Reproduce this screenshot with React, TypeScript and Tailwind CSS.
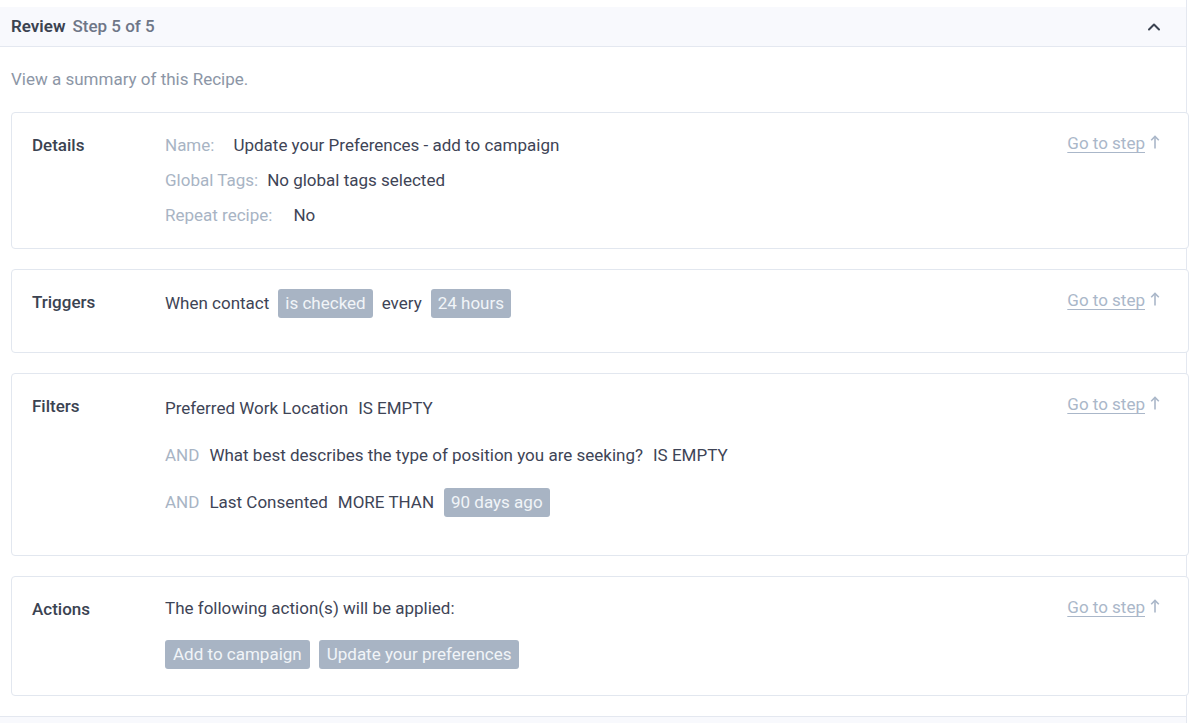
import { ChevronUp } from 'lucide-react';

function Badge({ children, wide }: { children: React.ReactNode; wide?: boolean }) {
  return (
    <span
      className={`inline-flex h-[29px] items-center rounded-[3px] bg-[#a8b4c4] leading-none text-[#f1f4f8] ${
        wide ? 'px-[8px]' : 'px-[7px]'
      }`}
    >
      {children}
    </span>
  );
}

function Card({
  label, height, children,
}: {
  label: string; height: string; children: React.ReactNode;
}) {
  return (
    <div className={`ml-[11px] mr-[-3px] flex rounded-[4px] border border-[#e2e7ef] bg-white ${height}`}>
      <div className="w-[153px] shrink-0 pl-[20px] pt-[20px] leading-[24px] font-medium text-[#3b4351]">{label}</div>
      <div className="flex-1">{children}</div>
      <div className="flex items-start pr-[28px] pt-[18px] leading-[24px]">
        <a className="text-[#aab7c9] underline underline-offset-[3px]">Go to step</a>
        <svg width="10" height="14" viewBox="0 0 10 14" className="ml-[5px] mt-[4px]" fill="none" stroke="#aab7c9" strokeWidth="1.6">
          <path d="M5 13.5V1.5" />
          <path d="M1.2 5.2L5 1.4l3.8 3.8" />
        </svg>
      </div>
    </div>
  );
}

export default function App() {
  return (
    <div
      className="min-h-screen bg-white text-[17px] text-[#3e4456]"
      style={{ fontFamily: 'Roboto, "Liberation Sans", sans-serif' }}
    >
      <div className="w-[1187px] border-r border-[#e4e8f0] pt-[7px]">
        {/* header */}
        <div className="flex h-[40px] items-center justify-between border-b border-[#e4e8f0] bg-[#f8f9fd] pl-[11px] pr-[22px]">
          <div className="text-[17px] font-medium">
            <span className="font-semibold text-[#3b4351]">Review</span>
            <span className="ml-[7px] text-[#6e7687]">Step 5 of 5</span>
          </div>
          <ChevronUp size={20} strokeWidth={2.4} className="text-[#3b4351]" />
        </div>

        <div className="pl-[11px] pt-[20px] leading-[24px] text-[#8c96a6]">View a summary of this Recipe.</div>

        <div className="flex flex-col gap-[20px] pt-[21px]">
          <Card label="Details" height="h-[137px]">
            <div className="flex flex-col gap-[11px] pt-[20px]">
              <div className="leading-[24px]">
                <span className="text-[#a8b4c4]">Name:</span>
                <span className="ml-[19px]">Update your Preferences - add to campaign</span>
              </div>
              <div className="leading-[24px]">
                <span className="text-[#a8b4c4]">Global Tags:</span>
                <span className="ml-[9px]">No global tags selected</span>
              </div>
              <div className="leading-[24px]">
                <span className="text-[#a8b4c4]">Repeat recipe:</span>
                <span className="ml-[21px]">No</span>
              </div>
            </div>
          </Card>

          <Card label="Triggers" height="h-[84px]">
            <div className="flex items-center gap-[9px] pt-[19px]">
              <span>When contact</span>
              <Badge>is checked</Badge>
              <span>every</span>
              <Badge>24 hours</Badge>
            </div>
          </Card>

          <Card label="Filters" height="h-[183px]">
            <div className="flex flex-col gap-[18px] pt-[20px]">
              <div className="flex h-[29px] items-center gap-[10px]">
                <span>Preferred Work Location</span>
                <span>IS EMPTY</span>
              </div>
              <div className="flex h-[29px] items-center gap-[10px]">
                <span className="text-[#a8b4c4]">AND</span>
                <span>What best describes the type of position you are seeking?</span>
                <span>IS EMPTY</span>
              </div>
              <div className="flex h-[29px] items-center gap-[10px]">
                <span className="text-[#a8b4c4]">AND</span>
                <span>Last Consented</span>
                <span>MORE THAN</span>
                <Badge>90 days ago</Badge>
              </div>
            </div>
          </Card>

          <Card label="Actions" height="h-[120px]">
            <div className="flex flex-col gap-[20px] pt-[19px]">
              <div className="leading-[24px]">The following action(s) will be applied:</div>
              <div className="flex gap-[9px]">
                <Badge wide>Add to campaign</Badge>
                <Badge wide>Update your preferences</Badge>
              </div>
            </div>
          </Card>
        </div>

        <div className="mt-[20px] h-[10px] border-t border-[#e4e8f0] bg-[#f8f9fd]" />
      </div>
    </div>
  );
}
